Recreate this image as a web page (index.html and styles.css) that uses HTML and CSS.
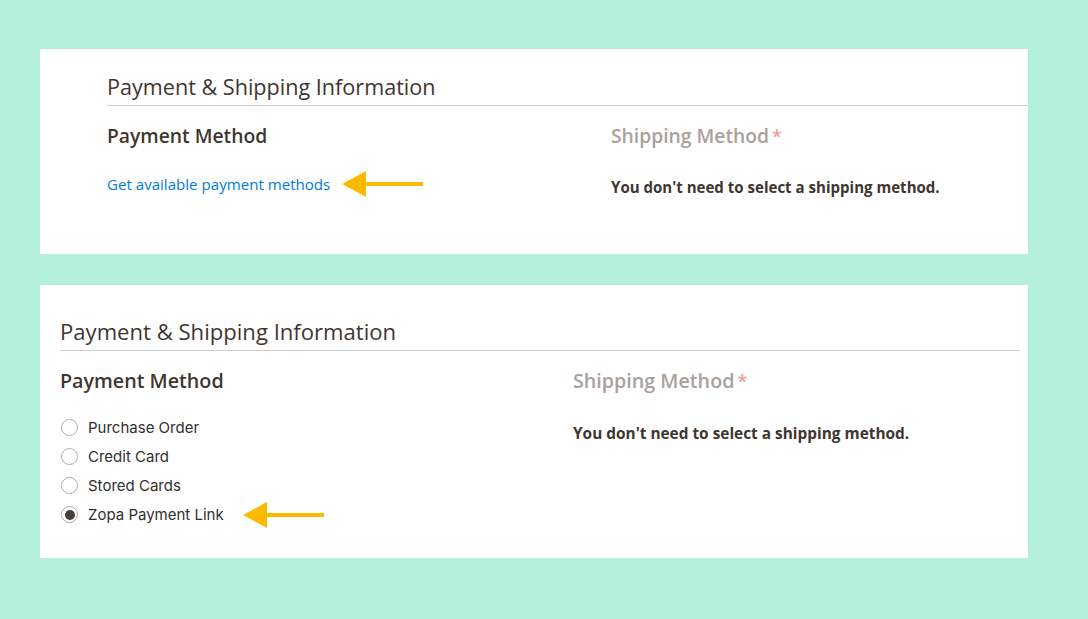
FILE: index.html
```html
<!DOCTYPE html>
<html lang="en">
<head>
<meta charset="utf-8">
<title>Payment &amp; Shipping Information</title>
<link rel="stylesheet" href="styles.css">
</head>
<body>
<main class="page">
  <section class="panel panel-one">
    <h2 class="legend">Payment &amp; Shipping Information</h2>
    <div class="cols">
      <div class="col">
        <h3 class="col-title">Payment Method</h3>
        <div class="link-row">
          <a class="pay-link" href="#">Get available payment methods</a>
          <svg class="arrow" width="82" height="28" viewBox="0 0 82 28"><polygon points="0,14 24,1 24,27" fill="#fbba00"/><rect x="23" y="12" width="58" height="4" fill="#fbba00"/></svg>
        </div>
      </div>
      <div class="col">
        <h3 class="col-title muted">Shipping Method<span class="req">*</span></h3>
        <p class="note">You don't need to select a shipping method.</p>
      </div>
    </div>
  </section>

  <section class="panel panel-two">
    <h2 class="legend">Payment &amp; Shipping Information</h2>
    <div class="cols">
      <div class="col">
        <h3 class="col-title">Payment Method</h3>
        <ul class="options">
          <li class="option"><span class="radio"></span><span class="opt-label">Purchase Order</span></li>
          <li class="option"><span class="radio"></span><span class="opt-label">Credit Card</span></li>
          <li class="option"><span class="radio"></span><span class="opt-label">Stored Cards</span></li>
          <li class="option"><span class="radio checked"></span><span class="opt-label">Zopa Payment Link</span>
            <svg class="arrow arrow-two" width="82" height="28" viewBox="0 0 82 28"><polygon points="0,14 24,1 24,27" fill="#fbba00"/><rect x="23" y="12" width="58" height="4" fill="#fbba00"/></svg>
          </li>
        </ul>
      </div>
      <div class="col">
        <h3 class="col-title muted">Shipping Method<span class="req">*</span></h3>
        <p class="note note-two">You don't need to select a shipping method.</p>
      </div>
    </div>
  </section>
</main>
</body>
</html>
```

FILE: styles.css
```css
* { box-sizing: border-box; }
html, body { margin: 0; padding: 0; }
body {
  background: #b4efdb;
  width: 1088px;
  height: 619px;
  overflow: hidden;
  font-family: "Open Sans", "Noto Sans", sans-serif;
  color: #41362f;
}
.page {
  display: flex;
  flex-direction: column;
  gap: 31px;
  padding: 49px 0 0 40px;
}
.panel {
  background: #fff;
  width: 988px;
}
.panel-one {
  height: 205px;
  padding: 25px 0 0 67px;
}
.panel-two {
  height: 273px;
  padding: 33px 8px 0 20px;
}
.legend {
  margin: 0;
  font-size: 21.6px;
  font-weight: 400;
  line-height: 26px;
  padding-bottom: 5px;
  border-bottom: 1px solid #cccccc;
  color: #41362f;
}
.panel-two .legend { padding-bottom: 6px; font-size: 22.1px; }
.cols {
  display: grid;
  margin-top: 18px;
}
.panel-one .cols { grid-template-columns: 504px 1fr; }
.panel-two .cols { grid-template-columns: 513px 1fr; }
.col-title {
  margin: 0;
  font-size: 19.3px;
  font-weight: 600;
  line-height: 24px;
  color: #41362f;
}
.panel-two .col-title { font-size: 19.7px; }
.col-title.muted { color: #a8a19c; }
.req {
  color: #f49a93;
  margin-left: 3px;
  font-size: 18px;
}
.link-row {
  display: flex;
  align-items: center;
  margin-top: 22px;
  height: 28px;
}
.pay-link {
  font-size: 15.1px;
  line-height: 20px;
  color: #007bdb;
  text-decoration: none;
}
.arrow { margin-left: 12px; display: block; }
.note {
  margin: 29px 0 0;
  font-size: 15.05px;
  font-weight: 700;
  line-height: 20px;
  color: #41362f;
}
.note-two { margin-top: 31px; font-size: 15.4px; }
.options {
  list-style: none;
  margin: 20px 0 0;
  padding: 0;
}
.option {
  display: flex;
  align-items: center;
  height: 29px;
}
.radio {
  width: 17px;
  height: 17px;
  border: 1px solid #adadad;
  border-radius: 50%;
  margin-left: 1px;
  margin-right: 10px;
  background: #fff;
  position: relative;
}
.radio.checked::after {
  content: "";
  position: absolute;
  left: 2.5px;
  top: 2.5px;
  width: 10px;
  height: 10px;
  border-radius: 50%;
  background: #4a3f39;
}
.opt-label {
  font-family: Inter, "Noto Sans", sans-serif;
  font-size: 15px;
  line-height: 20px;
  color: #303030;
}
.arrow-two { margin-left: 19px; }
```
